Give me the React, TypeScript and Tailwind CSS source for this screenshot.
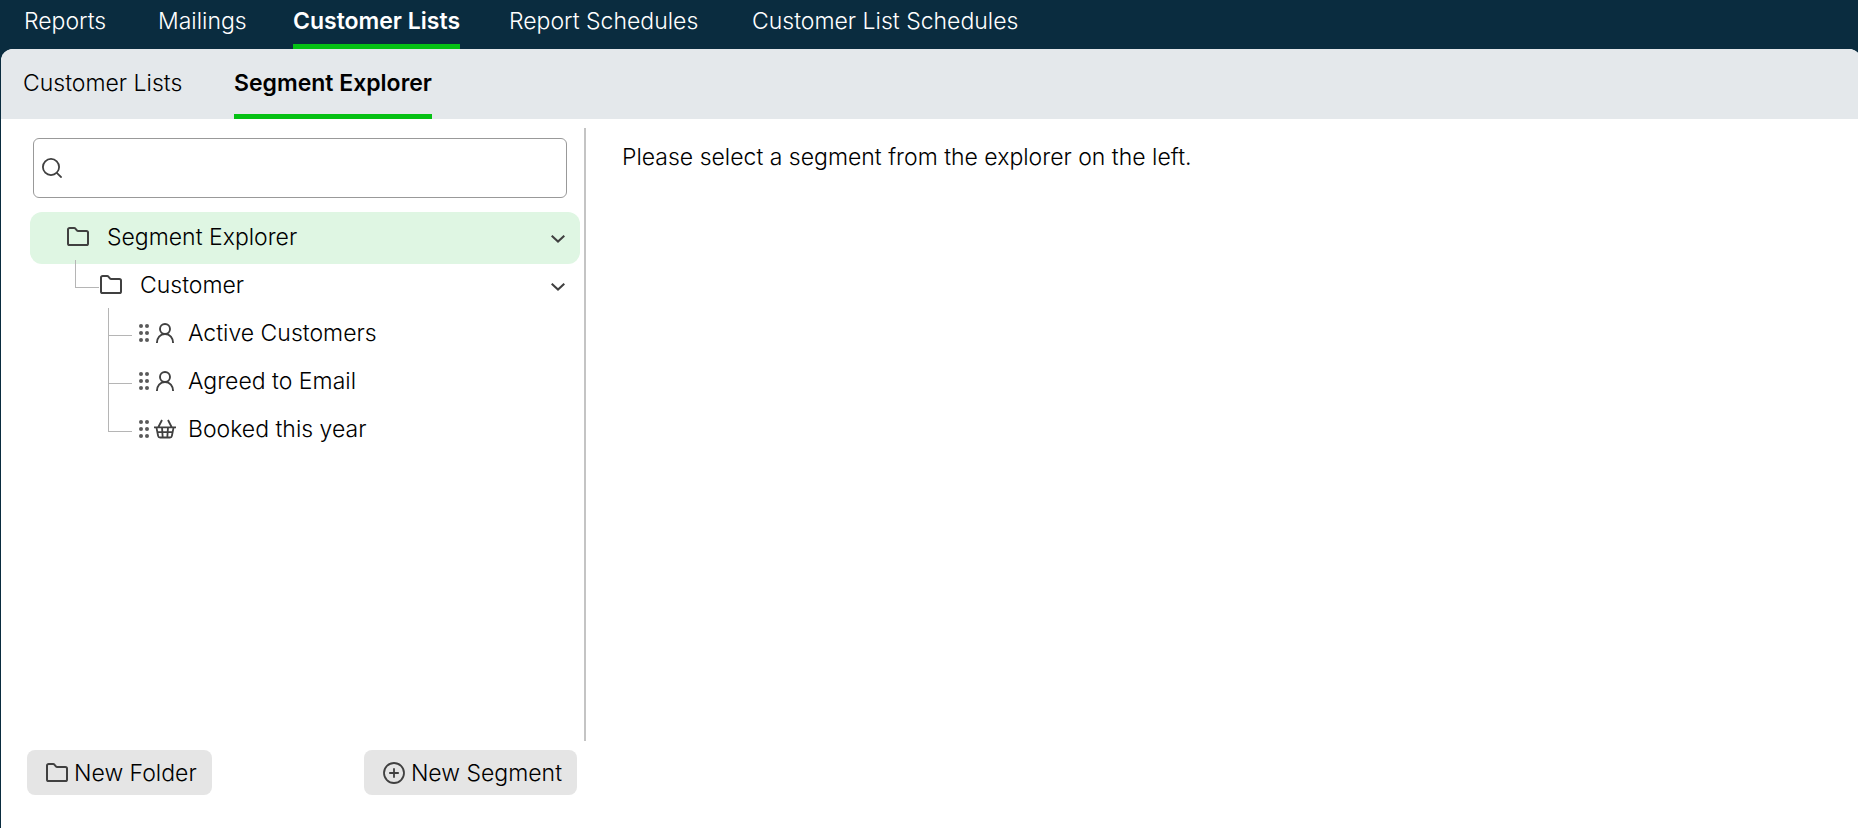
import { useState } from 'react';

const mainTabs = [
    { label: 'Reports', width: 'w-[134px]' },
    { label: 'Mailings', width: 'w-[135px]' },
    { label: 'Customer Lists', width: 'w-[216px]' },
    { label: 'Report Schedules', width: 'w-[243px]' },
    { label: 'Customer List Schedules', width: 'w-[300px]' },
];

const subTabs = [
    { label: 'Customer Lists', width: 'w-[211px]' },
    { label: 'Segment Explorer', width: 'w-[240px]' },
];

const segments = [
    { label: 'Active Customers', icon: 'user' },
    { label: 'Agreed to Email', icon: 'user' },
    { label: 'Booked this year', icon: 'basket' },
];

function FolderIcon() {
    return (
        <svg width="22" height="19" viewBox="0 0 22 19" fill="none" stroke="#404040" strokeWidth="2" strokeLinejoin="round" className="shrink-0" aria-hidden="true">
            <path d="M1 2.6A1.6 1.6 0 0 1 2.6 1h4.6c.5 0 .9.2 1.2.6l1.5 1.8c.3.4.8.6 1.3.6h8.2A1.6 1.6 0 0 1 21 5.600v10.800A1.6 1.6 0 0 1 19.400 18H2.600A1.6 1.6 0 0 1 1 16.400z" />
        </svg>
    );
}

function SearchIcon() {
    return (
        <svg width="20" height="20" viewBox="0 0 20 20" fill="none" stroke="#404040" strokeWidth="1.8" className="shrink-0" aria-hidden="true">
            <circle cx="9" cy="9" r="8.1" />
            <path d="M14.8 14.8l4.8 4.8" />
        </svg>
    );
}

function PlusCircleIcon() {
    return (
        <svg width="22" height="22" viewBox="0 0 22 22" fill="none" stroke="#404040" strokeWidth="1.8" className="shrink-0" aria-hidden="true">
            <circle cx="11" cy="11" r="10" />
            <path d="M11 6.200v9.600M6.200 11h9.600" />
        </svg>
    );
}

function ChevronIcon() {
    return (
        <svg width="14" height="8" viewBox="0 0 14 8" fill="none" stroke="#404040" strokeWidth="2" aria-hidden="true">
            <path d="M.7.7L7 6.600 13.300.7" />
        </svg>
    );
}

function UserIcon() {
    return (
        <svg width="22" height="20" viewBox="0 0 22 20" fill="none" stroke="#404040" strokeWidth="1.9" className="shrink-0" aria-hidden="true">
            <circle cx="11" cy="6" r="5" />
            <path d="M2.900 20c0-5.200 3.200-9 8.100-9s8.100 3.800 8.100 9" />
        </svg>
    );
}

function BasketIcon() {
    return (
        <svg width="22" height="20" viewBox="0 0 22 20" fill="none" stroke="#404040" strokeWidth="1.8" strokeLinejoin="round" className="shrink-0" aria-hidden="true">
            <path d="M0 8.400h22M2.400 8.400l1.700 8.400a2 2 0 0 0 2 1.700h9.800a2 2 0 0 0 2-1.700l1.700-8.400M4.400 8L8 1M17.600 8L14 1M3.400 13.200h15.200M8 8.400l.7 10M14 8.400l-.7 10" />
        </svg>
    );
}

function DragDots() {
    return (
        <svg width="10" height="18" viewBox="0 0 10 18" fill="#5a5a5a" className="shrink-0" aria-hidden="true">
            {[2, 9, 16].map((y) => (
                <g key={y}>
                    <circle cx="2" cy={y} r="2" />
                    <circle cx="8" cy={y} r="2" />
                </g>
            ))}
        </svg>
    );
}

export default function App() {
    const [query, setQuery] = useState('');
    const [rootOpen, setRootOpen] = useState(true);
    const [customerOpen, setCustomerOpen] = useState(true);

    return (
        <div className="flex min-h-screen flex-col overflow-hidden bg-[#0a2c3f] font-['Inter',sans-serif] text-[23px] leading-8 text-black">
            <nav className="flex h-[49px] items-stretch pl-6 text-white" aria-label="Main">
                {mainTabs.map((tab) => (
                    <div key={tab.label} className={`flex ${tab.width}`}>
                        <a
                            href="#"
                            className={`whitespace-nowrap pt-[5px] ${tab.label === 'Customer Lists' ? 'border-b-5 border-[#05c114] font-semibold' : 'font-light'}`}
                        >
                            {tab.label}
                        </a>
                    </div>
                ))}
            </nav>

            <div className="-mr-[3px] ml-px flex flex-1 flex-col overflow-hidden rounded-t-xl bg-white">
                <nav className="flex h-[70px] items-stretch bg-[#e4e8eb] pl-[22px]" aria-label="Customer lists">
                    {subTabs.map((tab) => (
                        <div key={tab.label} className={`flex ${tab.width}`}>
                            <a
                                href="#"
                                className={`whitespace-nowrap pt-[18px] ${tab.label === 'Segment Explorer' ? 'border-b-5 border-[#05c114] font-semibold' : 'font-light'}`}
                            >
                                {tab.label}
                            </a>
                        </div>
                    ))}
                </nav>

                <div className="flex flex-1 pt-[9px] font-light">
                    <div className="flex w-[585px] shrink-0 flex-col">
                        <aside className="flex-1 border-r-2 border-[#c4c4c4] pt-[10px]">
                            <label className="mr-[17px] ml-8 flex h-[60px] items-center gap-2 rounded-md border border-[#999] px-2">
                                <SearchIcon />
                                <input
                                    type="text"
                                    aria-label="Search segments"
                                    value={query}
                                    onChange={(e) => setQuery(e.target.value)}
                                    className="min-w-0 flex-1 bg-transparent outline-none"
                                />
                            </label>

                            <ul className="mt-[14px] mr-1 ml-[29px]">
                                <li>
                                    <div className="-mb-0.5 flex h-[52px] items-center rounded-xl bg-[#dff6e3] pr-[15px] pb-[3px] pl-[37px]">
                                        <FolderIcon />
                                        <span className="ml-[18px] flex-1">Segment Explorer</span>
                                        <button type="button" className="pt-1" aria-label="Toggle Segment Explorer" aria-expanded={rootOpen} onClick={() => setRootOpen(!rootOpen)}>
                                            <ChevronIcon />
                                        </button>
                                    </div>
                                    {rootOpen && (
                                        <ul>
                                            <li className="relative">
                                                <span className="absolute -top-0.5 left-[45px] h-7 w-6 border-b border-l border-[#b5b5b5]" />
                                                <div className="flex h-12 items-center pr-[15px] pb-[3px] pl-[70px]">
                                                    <FolderIcon />
                                                    <span className="ml-[18px] flex-1">Customer</span>
                                                    <button type="button" className="pt-1" aria-label="Toggle Customer" aria-expanded={customerOpen} onClick={() => setCustomerOpen(!customerOpen)}>
                                                        <ChevronIcon />
                                                    </button>
                                                </div>
                                                {customerOpen && (
                                                    <ul>
                                                        {segments.map((segment, i) => (
                                                            <li key={segment.label} className="relative flex h-12 items-center pb-[3px] pl-[109px]">
                                                                <span className={`absolute left-[78px] w-6 border-b border-l border-[#b5b5b5] ${i === 0 ? '-top-0.5 h-7' : '-top-[22px] h-12'}`} />
                                                                <DragDots />
                                                                <span className="mr-3 ml-[5px]">
                                                                    {segment.icon === 'user' ? <UserIcon /> : <BasketIcon />}
                                                                </span>
                                                                <a href="#">{segment.label}</a>
                                                            </li>
                                                        ))}
                                                    </ul>
                                                )}
                                            </li>
                                        </ul>
                                    )}
                                </li>
                            </ul>
                        </aside>

                        <div className="flex justify-between pt-[9px] pr-[9px] pb-[33px] pl-[26px]">
                            <button type="button" className="flex h-[45px] items-center gap-1.5 rounded-lg bg-[#e5e5e5] pr-[15px] pl-[19px]">
                                <FolderIcon />
                                New Folder
                            </button>
                            <button type="button" className="flex h-[45px] items-center gap-1.5 rounded-lg bg-[#e5e5e5] pr-[15px] pl-[19px]">
                                <PlusCircleIcon />
                                New Segment
                            </button>
                        </div>
                    </div>

                    <main className="flex-1 px-9 pt-[13px]">
                        <p>Please select a segment from the explorer on the left.</p>
                    </main>
                </div>
            </div>
        </div>
    );
}
